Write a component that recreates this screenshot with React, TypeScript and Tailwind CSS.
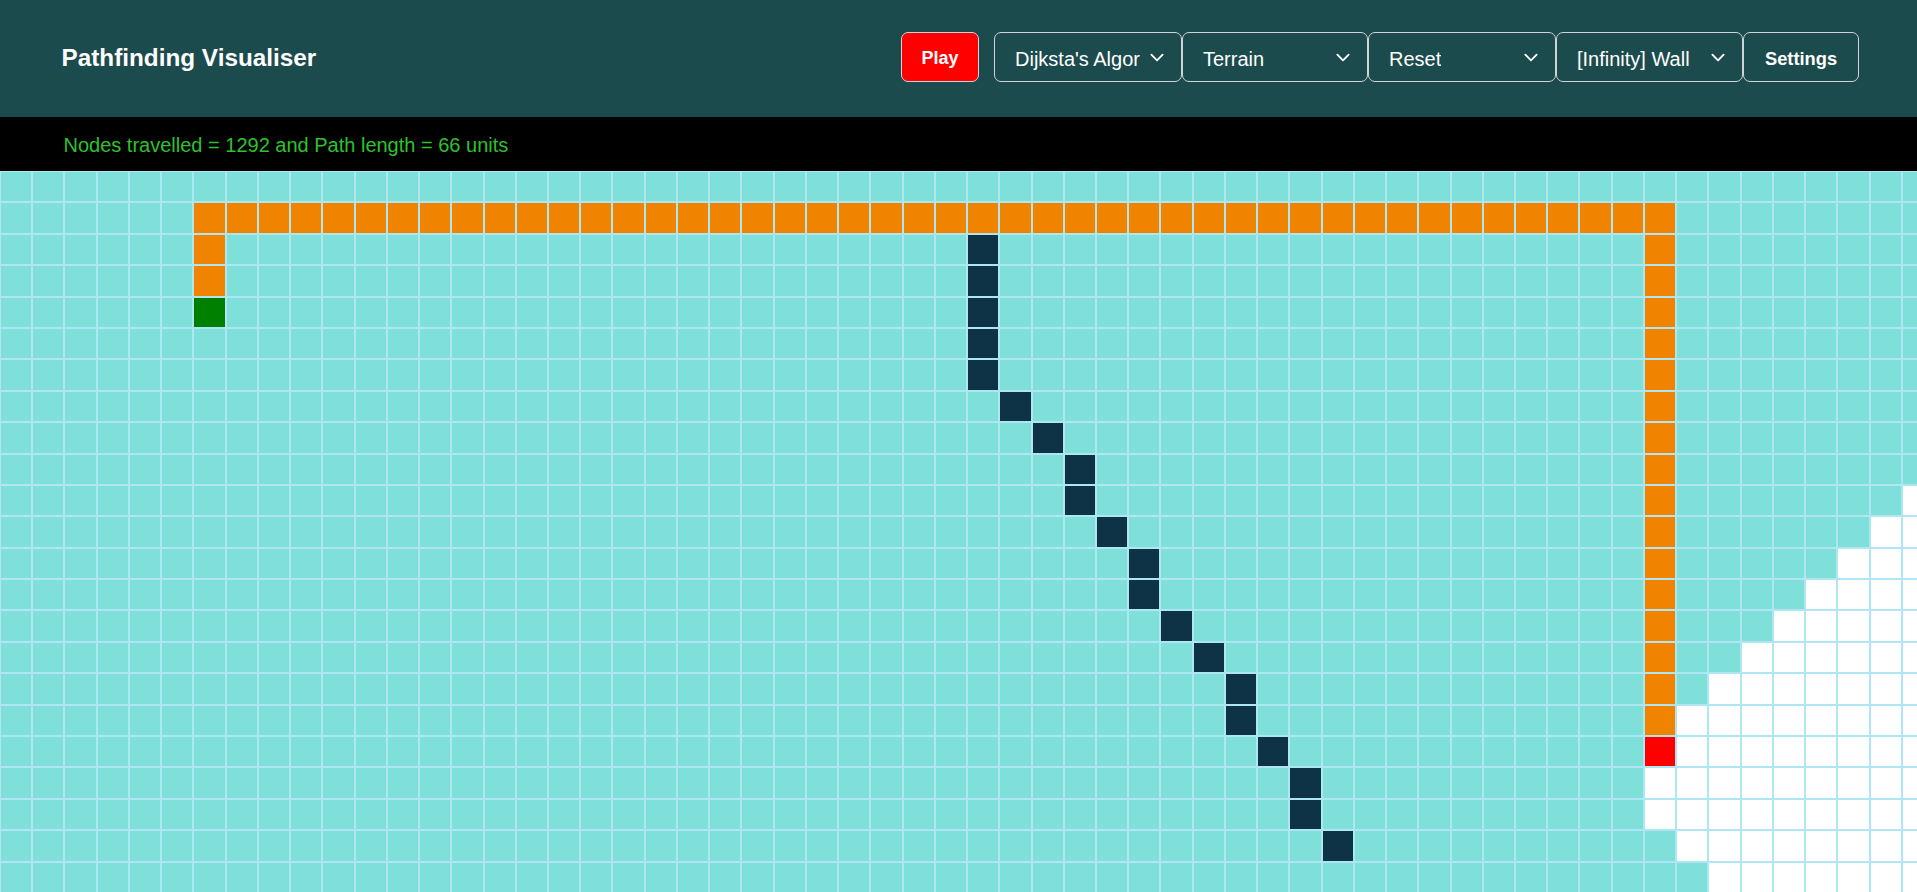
import React from "react";

const COLS = 60;
const ROWS = 24;

type Cell = "visited" | "unvisited" | "wall" | "path" | "start" | "end";

const WALLS: Array<[number, number]> = [
  [2, 30], [3, 30], [4, 30], [5, 30], [6, 30],
  [7, 31], [8, 32], [9, 33], [10, 33], [11, 34],
  [12, 35], [13, 35], [14, 36], [15, 37], [16, 38],
  [17, 38], [18, 39], [19, 40], [20, 40], [21, 41],
];

const WHITE_START: Record<number, number> = {
  10: 59, 11: 58, 12: 57, 13: 56, 14: 55, 15: 54, 16: 53, 17: 52,
  18: 52, 19: 51, 20: 51, 21: 52, 22: 53, 23: 54,
};

const wallSet = new Set(WALLS.map(([r, c]) => `${r}-${c}`));

function cellType(r: number, c: number): Cell {
  if (r === 4 && c === 6) return "start";
  if (r === 18 && c === 51) return "end";
  if (r === 1 && c >= 6 && c <= 51) return "path";
  if (c === 6 && r >= 2 && r <= 3) return "path";
  if (c === 51 && r >= 2 && r <= 17) return "path";
  if (wallSet.has(`${r}-${c}`)) return "wall";
  const ws = WHITE_START[r];
  if (ws !== undefined && c >= ws) return "unvisited";
  return "visited";
}

const CELL_CLASS: Record<Cell, string> = {
  visited: "bg-[#7fdfd9]",
  unvisited: "bg-white",
  wall: "bg-[#0e3246]",
  path: "bg-[#f08400]",
  start: "bg-[#008000]",
  end: "bg-[#ff0000]",
};

function Chevron() {
  return (
    <svg width="20" height="15" viewBox="0 0 16 16" className="shrink-0">
      <path
        d="m2 5 6 6 6-6"
        fill="none"
        stroke="#ffffff"
        strokeWidth="2"
        strokeLinecap="round"
        strokeLinejoin="round"
      />
    </svg>
  );
}

function Select({ label, width }: { label: string; width: string }) {
  return (
    <div
      className={`${width} h-[50px] box-border border border-[#ced4da] rounded-[7px] flex items-center justify-between pl-[20px] pr-[14px] pt-[3px] text-white text-[20px] whitespace-nowrap overflow-hidden`}
    >
      <span className="overflow-hidden">{label}</span>
      <span className="-mt-[3px] flex items-center">
        <Chevron />
      </span>
    </div>
  );
}

export default function App() {
  const rows = [];
  for (let r = 0; r < ROWS; r++) {
    for (let c = 0; c < COLS; c++) {
      rows.push(<div key={`${r}-${c}`} className={CELL_CLASS[cellType(r, c)]} />);
    }
  }

  return (
    <div className="w-full h-[892px] overflow-hidden bg-white font-['Liberation_Sans',Arial,sans-serif]">
      <header className="h-[117px] bg-[#1c4b4d] flex items-center justify-between pl-[61.5px] pr-[58px] pb-[3px]">
        <div className="pt-[2px] text-white font-bold text-[24.3px] leading-none">
          Pathfinding Visualiser
        </div>
        <div className="flex items-center">
          <button className="w-[78px] h-[50px] box-border border border-[#ced4da] rounded-[7px] bg-[#ff0000] text-white font-bold text-[18px] pt-[3px] mr-[15px] flex items-center justify-center">
            Play
          </button>
          <Select label="Dijksta's Algor" width="w-[188px]" />
          <Select label="Terrain" width="w-[186px]" />
          <Select label="Reset" width="w-[188px]" />
          <Select label="[Infinity] Wall" width="w-[187px]" />
          <button className="w-[116px] h-[50px] box-border border border-[#ced4da] rounded-[7px] text-white font-bold text-[18.3px] pt-[3px] flex items-center justify-center">
            Settings
          </button>
        </div>
      </header>
      <div className="h-[54px] bg-black flex items-center pl-[63.5px] pt-[2px] text-[20px] text-[#2dc22d]">
        Nodes travelled = 1292 and Path length = 66 units
      </div>
      <div className="w-full overflow-hidden">
        <div className="w-max bg-[#afe6f4] pt-px pl-px grid grid-cols-[repeat(60,30.24px)] auto-rows-[29.4px] gap-[2px]">
          {rows}
        </div>
      </div>
    </div>
  );
}
